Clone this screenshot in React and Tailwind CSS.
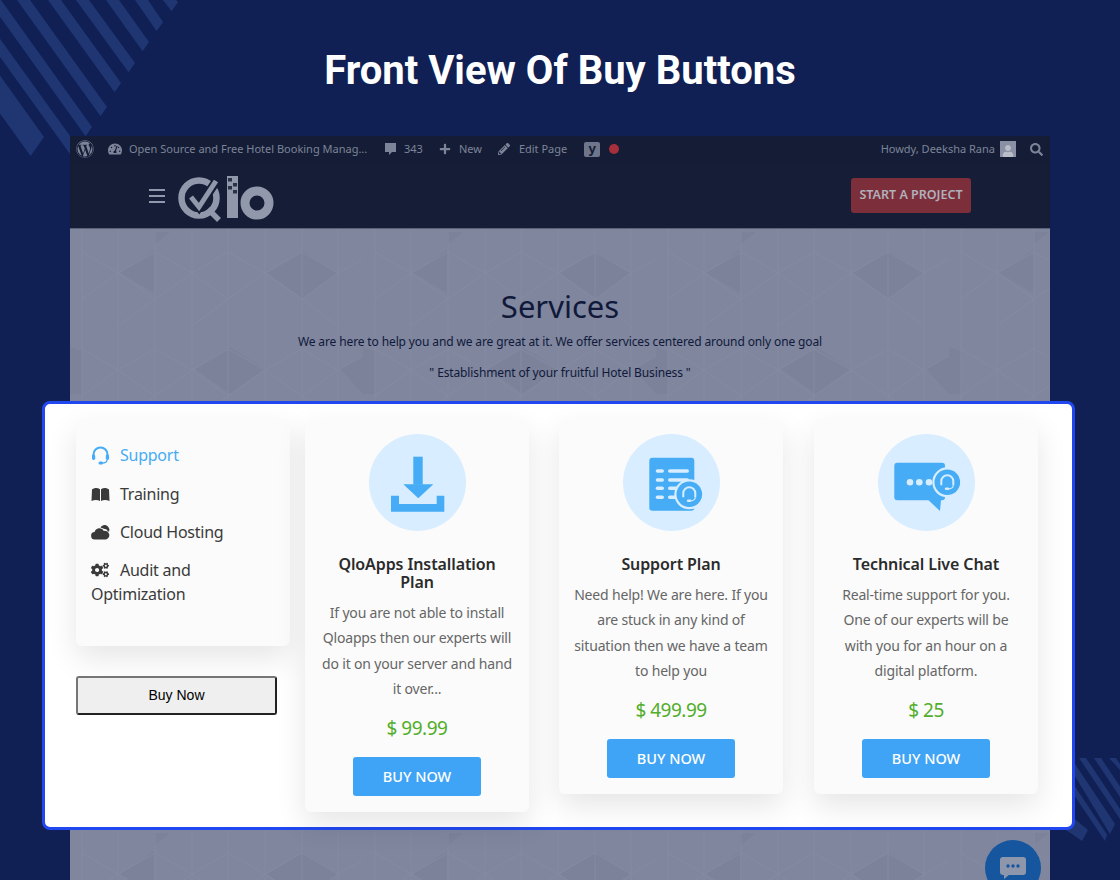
import React from 'react';
import { FaWordpress, FaTachometerAlt, FaPlus, FaPencilAlt, FaSearch, FaCogs, FaUser } from 'react-icons/fa';

const BLUE = '#45acf5';
const PALE = '#d8edff';

const topStripes = [
  [176, 178, 2], [148, 163, 22], [119, 149, 42], [89, 135, 63],
  [61, 121, 83], [30, 107, 107], [1, 92, 127], [-28, 78, 147],
];

// diagonal bands behind the screenshot
function TopStripes() {
  return (
    <svg className="absolute left-0 top-0" width="200" height="170" fill="#1f3673">
      {topStripes.map(([b, x, y]) => (
        <polygon key={b} points={`${b},0 ${b - 13},0 ${x - 6.4},${y + 9.2} ${x},${y}`} />
      ))}
      <polygon points="-54,0 -82,0 30.6,156 44,137" />
    </svg>
  );
}

function BottomStripes() {
  return (
    <svg className="absolute left-[1040px] top-[750px]" width="80" height="100" fill="#1f3673">
      <polygon points="69,8 76,8 80,14 80,20" />
      <polygon points="54,8 61,8 80,36.5 80,47" />
      <polygon points="39,8 46,8 80,59 80,69" />
      <polygon points="24,8 31,8 75,74 70,84" />
      <polygon points="9,8 16,8 67,84.5 65,91" />
      <polygon points="0,40 0,62 42,91 48,80" />
    </svg>
  );
}

function HeroPattern({ id }) {
  const diamonds = [
    '50,3 84,21 50,44 84,64 84,21',
    '84,3 100,3 84,16',
    '197,44 233,22 268,44 233,70',
    '125,140 160,118 195,140 160,165',
    '270,140 293,126 293,165',
    '0,118 12,122 12,165 0,165',
  ];
  return (
    <svg className="absolute inset-0" width="100%" height="100%">
      <defs>
        <pattern id={`hex-${id}`} width="293" height="97" patternUnits="userSpaceOnUse">
          <path d="M12 0V97M48 0V97M85 0V97M122 0V97M158 0V97M195 0V97M232 0V97M268 0V97" stroke="#838aa2" strokeWidth="1" />
          <path d="M12 23L48 44L85 23L122 44L158 23L195 44L232 23L268 44L293 30M12 70L48 44M85 70L48 44M85 70L122 44M158 70L122 44M158 70L195 44M232 70L195 44M232 70L268 44M268 97L232 70M85 70L48 97M158 70L122 97" stroke="#838aa2" strokeWidth="1" fill="none" />
        </pattern>
        <pattern id={`dia-${id}`} width="293" height="194" patternUnits="userSpaceOnUse">
          {diamonds.map((p) => (
            <polygon key={p} points={p} fill="#7b8299" />
          ))}
        </pattern>
      </defs>
      <rect width="100%" height="100%" fill={`url(#dia-${id})`} />
      <rect width="100%" height="100%" fill={`url(#hex-${id})`} />
    </svg>
  );
}

function Logo() {
  return (
    <svg width="100" height="52" viewBox="0 0 100 52" fill="none">
      <circle cx="24" cy="25" r="17.5" stroke="#9298ab" strokeWidth="6.5" />
      <path d="M33 36L44 47" stroke="#9298ab" strokeWidth="5.5" />
      <path d="M16 24L24 34L40 10" stroke="#151e36" strokeWidth="9" />
      <path d="M16 24L24 34L41 8" stroke="#9298ab" strokeWidth="5" />
      <rect x="52" y="3" width="11" height="42" fill="#9298ab" />
      <rect x="53" y="5" width="4" height="3.500" fill="#2a3248" />
      <rect x="58" y="10" width="4" height="3.500" fill="#2a3248" />
      <rect x="53" y="13" width="4" height="3.500" fill="#2a3248" />
      <rect x="58" y="17" width="4" height="3.500" fill="#2a3248" />
      <circle cx="82" cy="30" r="12" stroke="#9298ab" strokeWidth="9" />
    </svg>
  );
}

function Headset({ color, size = 19 }) {
  return (
    <svg width={size} height={size} viewBox="0 0 19 19" fill="none">
      <path d="M2.500 10V8.500a7 7 0 0 1 14 0V10" stroke={color} strokeWidth="2" />
      <rect x="1" y="8.500" width="3.200" height="5.500" rx="1.400" fill={color} />
      <rect x="14.800" y="8.500" width="3.200" height="5.500" rx="1.400" fill={color} />
      <path d="M16 14c0 2-2 3-5 3" stroke={color} strokeWidth="1.300" />
      <rect x="7.500" y="15.500" width="4.500" height="3" rx="1.500" fill={color} />
    </svg>
  );
}

function BookIcon() {
  return (
    <svg width="19" height="17" viewBox="0 0 19 17" fill="#3a3a3a">
      <path d="M1 3.500C3.500 1.500 6.500 1.500 9 3.200V15C6.500 13.500 3.500 13.500 .5 15z" />
      <path d="M10 3.200C12.500 1.500 15.500 1.500 18 3.500L18.500 15C15.500 13.500 12.500 13.500 10 15z" />
    </svg>
  );
}

function CloudIcon() {
  return (
    <svg width="19" height="16" viewBox="0 0 19 16" fill="#3a3a3a">
      <path d="M4 15.500a3.700 3.700 0 0 1-.4-7.400 5 5 0 0 1 9.300-1.200 4.300 4.300 0 0 1 2 8.600z" />
      <path d="M9.500 3.500C10.500 1.500 13 .5 15 1.200c2 .8 3.500 2.800 3.500 5l-1.600 2c0-2-1.500-3.500-3.300-3.300z" />
    </svg>
  );
}

function DownloadIcon() {
  return (
    <svg width="97" height="97" viewBox="0 0 97 97" fill={BLUE}>
      <rect x="44.300" y="22.700" width="9.400" height="28" />
      <polygon points="34.300,50.300 64.300,50.300 49.300,64.300" />
      <polygon points="22,61.700 30,61.700 30,70 67.700,70 67.700,61.700 75.300,61.700 75.300,77.700 22,77.700" />
    </svg>
  );
}

function BadgeHeadset({ cx, cy }) {
  return (
    <g>
      <circle cx={cx} cy={cy} r="15" fill={PALE} />
      <circle cx={cx} cy={cy} r="12.800" fill={BLUE} />
      <path d={`M${cx - 6} ${cy + 3}V${cy - 1}a6 6 0 0 1 12 0V${cy + 3}`} fill="none" stroke={PALE} strokeWidth="2" />
      <path d={`M${cx + 6} ${cy + 3}c0 2-2 3.500-4.500 3.500`} fill="none" stroke={PALE} strokeWidth="1.200" />
      <rect x={cx - 2.500} y={cy + 5.200} width="4.500" height="2.600" rx="1.300" fill={PALE} />
    </g>
  );
}

function PlanIcon() {
  const rows = [37, 46, 54.3, 63.3];
  return (
    <svg width="97" height="97" viewBox="0 0 97 97">
      <rect x="26.300" y="23.700" width="45" height="53" rx="3" fill={BLUE} />
      {rows.map((y) => (
        <g key={y} fill={PALE}>
          <rect x="32.700" y={y - 1.800} width="8.300" height="3.600" rx="1.800" />
          <rect x="45" y={y - 1.800} width="21" height="3.600" rx="1.800" />
        </g>
      ))}
      <BadgeHeadset cx={66.3} cy={60.3} />
    </svg>
  );
}

function ChatIcon() {
  return (
    <svg width="97" height="97" viewBox="0 0 97 97">
      <rect x="16.300" y="28.700" width="50.700" height="37.600" rx="3" fill={BLUE} />
      <polygon points="50.300,66 62,77 63,66" fill={BLUE} />
      <circle cx="32" cy="48.300" r="3.300" fill={PALE} />
      <circle cx="41.300" cy="48.300" r="3.300" fill={PALE} />
      <circle cx="51" cy="48.300" r="3.300" fill={PALE} />
      <BadgeHeadset cx={69.3} cy={48.3} />
    </svg>
  );
}

const plans = [
  {
    title: ['QloApps Installation', 'Plan'],
    lines: ['If you are not able to install', 'Qloapps then our experts will', 'do it on your server and hand', 'it over...'],
    price: '$ 99.99',
    icon: <DownloadIcon />,
  },
  {
    title: ['Support Plan'],
    lines: ['Need help! We are here. If you', 'are stuck in any kind of', 'situation then we have a team', 'to help you'],
    price: '$ 499.99',
    icon: <PlanIcon />,
  },
  {
    title: ['Technical Live Chat'],
    lines: ['Real-time support for you.', 'One of our experts will be', 'with you for an hour on a', 'digital platform.'],
    price: '$ 25',
    icon: <ChatIcon />,
  },
];

function PlanCard({ plan }) {
  return (
    <div className="w-[224px] last:ml-px rounded-md bg-[#fbfbfb] pt-[15px] pb-4 flex flex-col items-center text-center shadow-[0_12px_30px_rgba(0,0,0,0.1)]">
      <div className="w-[97px] h-[97px] rounded-full bg-[#d8edff]">{plan.icon}</div>
      <h3 className="mt-6 text-[16px] tracking-[-0.1px] leading-[18px] font-semibold text-[#2b2b2b]">
        {plan.title.map((t) => (
          <div key={t}>{t}</div>
        ))}
      </h3>
      <div className="mt-[9px] text-[14px] tracking-[-0.17px] leading-[25.300px] text-[#666666] whitespace-nowrap">
        {plan.lines.map((l) => (
          <div key={l}>{l}</div>
        ))}
      </div>
      <div className="mt-[13px] text-[19px] tracking-[-0.5px] leading-7 text-[#52ae2a]">{plan.price}</div>
      <button className="mt-[15px] w-[128px] h-[39px] rounded-[3px] bg-[#3fa4f5] text-white text-[14.500px] font-medium">BUY NOW</button>
    </div>
  );
}

export default function App() {
  return (
    <div className="relative w-[1120px] h-[880px] overflow-hidden bg-[#102055] font-['Noto_Sans',sans-serif]">
      <TopStripes />
      <BottomStripes />

      {/* Title */}
      <div className="relative h-[136px] pt-[49px] text-center">
        <h1 className="font-['Roboto',sans-serif] font-bold text-[40px] leading-[44px] text-white">Front View Of Buy Buttons</h1>
      </div>

      {/* Dimmed site */}
      <div className="relative ml-[70px] w-[980px]">
        <div className="h-[27px] pb-[1px] bg-[#141d35] flex items-center pl-[6px] pr-[7px] text-[11px] text-[#7d8499]">
          <FaWordpress className="w-[18px] h-[18px]" />
          <FaTachometerAlt className="ml-[14px] w-[14px] h-[14px]" />
          <span className="ml-[7px] w-[239px] whitespace-nowrap">Open Source and Free Hotel Booking Manag...</span>
          <svg className="ml-[16px]" width="13" height="14" viewBox="0 0 13 14" fill="#7d8499">
            <path d="M1 1h11v9H8l-3 3v-3H1z" />
          </svg>
          <span className="ml-[7px]">343</span>
          <FaPlus className="ml-[16px] w-3 h-3" />
          <span className="ml-[8px]">New</span>
          <FaPencilAlt className="ml-[16px] w-3 h-3" />
          <span className="ml-[9px]">Edit Page</span>
          <span className="ml-[17px] w-[16px] h-[15px] rounded-[2px] bg-[#6f768b] text-[#141d35] text-[13px] leading-[13px] font-bold text-center">y</span>
          <span className="ml-[9px] w-[10px] h-[10px] rounded-full bg-[#a5303c]" />
          <span className="ml-auto">Howdy, Deeksha Rana</span>
          <span className="ml-[5px] w-4 h-4 bg-[#8b91a4] flex items-end justify-center overflow-hidden">
            <FaUser className="w-3 h-3 text-[#b9bdc9]" />
          </span>
          <FaSearch className="ml-[14px] w-[13px] h-[13px]" />
        </div>

        <div className="h-[65px] bg-[#151e36] flex items-center pl-[79px] pr-[79px]">
          <div className="flex flex-col gap-[4px] w-4">
            <div className="h-[2px] bg-[#9298ab]" />
            <div className="h-[2px] bg-[#9298ab]" />
            <div className="h-[2px] bg-[#9298ab]" />
          </div>
          <div className="ml-[10px] mt-[7px]">
            <Logo />
          </div>
          <button className="ml-auto w-[120px] h-[35px] rounded-[3px] bg-[#7c2f3b] text-[#b0b1bb] text-[12.500px] font-semibold">START A PROJECT</button>
        </div>

        <div className="relative h-[173px] bg-[#7f869e] border-t border-[#5b6278] flex flex-col items-center">
          <HeroPattern id="top" />
          <h2 className="relative mt-[57px] text-[31px] leading-[40px] text-[#10193a]">Services</h2>
          <p className="relative mt-[6px] text-[12px] tracking-[-0.125px] leading-5 text-[#10193a] whitespace-nowrap">We are here to help you and we are great at it. We offer services centered around only one goal</p>
          <p className="relative mt-[11px] text-[12px] tracking-[-0.125px] leading-5 text-[#10193a] whitespace-nowrap">" Establishment of your fruitful Hotel Business "</p>
        </div>

        {/* Highlighted panel */}
        <div className="relative z-10 -mx-[28px] w-[1033px] h-[429px] rounded-lg border-[3px] border-[#2148f0] bg-white pl-[31px] pt-[15px] flex gap-[15px] items-start">
          <div className="w-[214px] shrink-0">
            <div className="h-[227px] rounded-md bg-[#fbfbfb] pl-[15px] pt-6 text-[16px] tracking-[-0.25px] leading-6 text-[#3a3a3a] shadow-[0_12px_30px_rgba(0,0,0,0.1)]">
              <div className="flex items-center text-[#45acf5]">
                <span className="w-[29px]"><Headset color="#45acf5" /></span>Support
              </div>
              <div className="mt-[15px] flex items-center">
                <span className="w-[29px]"><BookIcon /></span>Training
              </div>
              <div className="mt-[14px] flex items-center">
                <span className="w-[29px]"><CloudIcon /></span>Cloud Hosting
              </div>
              <div className="mt-[14px]">
                <div className="flex items-center">
                  <span className="w-[29px]"><FaCogs className="w-[18px] h-[18px]" /></span>Audit and
                </div>
                <div>Optimization</div>
              </div>
            </div>
            <button className="mt-[30px] w-[201px] h-[39px] rounded-[3px] bg-[#efefef] border-2 border-[#767676] border-r-[#222222] border-b-[#222222] text-black text-[14px] font-['Liberation_Sans',sans-serif]">Buy Now</button>
          </div>
          <div className="flex gap-[30px] items-start">
            {plans.map((plan) => (
              <PlanCard key={plan.price} plan={plan} />
            ))}
          </div>
        </div>

        <div className="relative h-[60px] bg-[#7f869e]">
          <HeroPattern id="bottom" />
        </div>

        {/* Chat bubble */}
        <div className="absolute z-20 left-[915px] top-[704px] w-14 h-14 rounded-full bg-[#16569f] flex items-center justify-center">
          <svg width="28" height="24" viewBox="0 0 28 24">
            <rect x="1" y="1" width="26" height="18" rx="3" fill="#8e96ac" />
            <polygon points="5,18 5,23 11,18" fill="#8e96ac" />
            <circle cx="9" cy="10" r="1.700" fill="#16569f" />
            <circle cx="14" cy="10" r="1.700" fill="#16569f" />
            <circle cx="19" cy="10" r="1.700" fill="#16569f" />
          </svg>
        </div>
      </div>
    </div>
  );
}
